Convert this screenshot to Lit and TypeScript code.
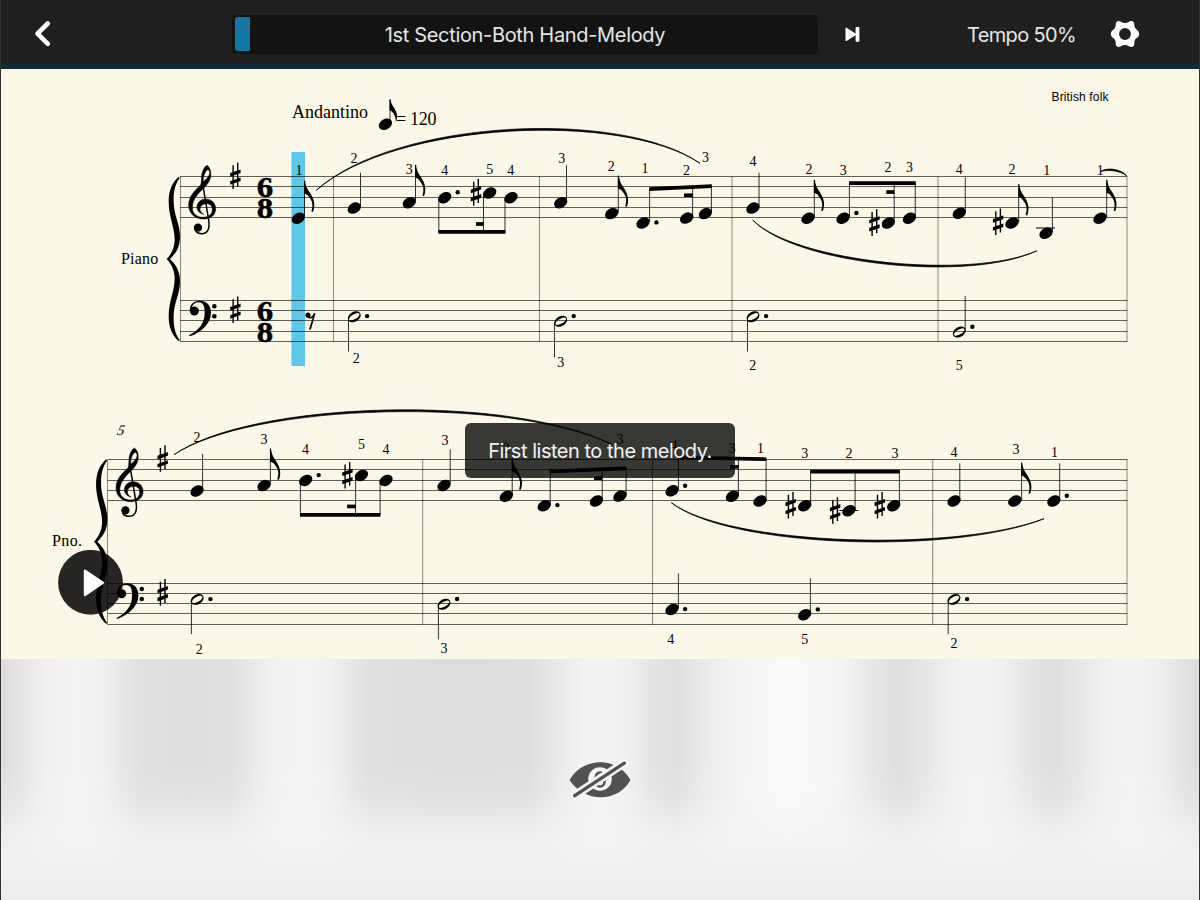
import { LitElement, html, svg, css } from "lit";
import { customElement } from "lit/decorators.js";

type Stem = { x: number; to: number };
type Note = { x: number; y: number; stem: Stem; half?: boolean; flag?: boolean; dot?: [number, number] };
type Mark = [string, number, number];

const n = (x: number, y: number, sx: number, to: number, extra: Partial<Note> = {}): Note => ({ x, y, stem: { x: sx, to }, ...extra });

const NOTES: Note[] = [
  n(385.4, 124.3, 390, 99.5, { flag: false }),
  n(298.3, 218.3, 304.5, 181, { flag: true }),
  n(354.3, 208.1, 360.5, 172.7),
  n(409.3, 202.7, 415.5, 165.3, { flag: true }),
  n(444.7, 197.7, 438.8, 233, { dot: [457.7, 192.3] }),
  n(489.7, 193, 483.5, 233),
  n(511, 197.7, 505, 233),
  n(560.7, 202.7, 566.5, 165.3),
  n(611.7, 213.6, 618.3, 176, { flag: true }),
  n(643, 223, 649.6, 188, { dot: [656.4, 222.4] }),
  n(686.7, 218.1, 692.6, 187),
  n(705.4, 213.6, 711.4, 186),
  n(753, 208.1, 759, 172.7),
  n(808, 218.3, 814.3, 180.3, { flag: true }),
  n(843, 218.3, 849.4, 183, { dot: [856.4, 213] }),
  n(888.3, 223, 894.2, 183),
  n(909.4, 218.3, 915.3, 183),
  n(959.3, 213.3, 965.3, 177.3),
  n(1012, 223, 1018.7, 184.7, { flag: true }),
  n(1046, 233.3, 1052.4, 197.3),
  n(1100, 218.3, 1106.7, 180.3, { flag: true }),
  n(354.3, 316.7, 348.5, 351.5, { half: true, dot: [367.1, 316.1] }),
  n(560.7, 321.3, 554.5, 357.3, { half: true, dot: [573.7, 316.1] }),
  n(753, 316.7, 747.5, 351.5, { half: true, dot: [766.1, 316.1] }),
  n(959.3, 332, 965.2, 296, { half: true, dot: [972.4, 326.8] }),

  n(197, 491, 202.6, 454),
  n(264, 485.6, 270.4, 449, { flag: true }),
  n(305.7, 480.4, 300.4, 515, { dot: [318.7, 475.1] }),
  n(361.4, 475.4, 355.6, 515),
  n(386, 480.4, 380.1, 515),
  n(444, 485.5, 450.2, 449.3),
  n(506.3, 496.3, 512.2, 459, { flag: true }),
  n(544.3, 505.7, 550.2, 471, { dot: [557.4, 505.1] }),
  n(596.4, 501, 602.2, 469),
  n(620, 496.1, 626.1, 468),
  n(672, 490.8, 678.4, 457, { dot: [685.1, 485.8] }),
  n(732.4, 496.3, 738.4, 458),
  n(760, 501, 766.1, 459),
  n(804.7, 505.7, 810.6, 471),
  n(849, 510.7, 855.1, 471),
  n(893.7, 505.7, 899.4, 471),
  n(954, 501, 959.8, 463.3),
  n(1014.8, 501, 1021.6, 463, { flag: true }),
  n(1053.8, 501, 1059.7, 463.3, { dot: [1066.8, 495.8] }),
  n(197.2, 599.4, 191.4, 634.2, { half: true, dot: [210.4, 599.1] }),
  n(444, 604.2, 438.4, 639.4, { half: true, dot: [457.1, 599] }),
  n(672, 609.4, 678.4, 573.4, { dot: [685.1, 609.1] }),
  n(804.7, 614.7, 810.4, 578.4, { dot: [817.8, 609.4] }),
  n(954, 599.4, 948.2, 634.2, { half: true, dot: [967.1, 599.1] }),
];

// x1, top1, x2, top2, thickness
const BEAMS: number[][] = [
  [438.4, 230, 505.3, 230, 3.8], [476, 222.1, 483.7, 222.1, 3.8],
  [649.2, 187.2, 711.8, 184.3, 3.7], [684, 193.4, 692.8, 193.4, 3.6],
  [849, 181.3, 915.7, 181.3, 3.8], [886.3, 190.2, 894.3, 190.2, 3.7],
  [300, 513, 380.4, 513, 3.7], [347.1, 504.6, 355.7, 504.6, 3.7],
  [549.8, 469.6, 626.4, 466.6, 3.6], [594, 476.4, 602.3, 476.4, 3.6],
  [678.1, 455.7, 766.4, 457.4, 3.6], [730, 465, 738.6, 465, 3.7],
  [810.2, 469.7, 899.8, 469.7, 3.7],
];

const SHARPS: [number, number][] = [
  [235.4, 175.8], [235.4, 309.8], [476, 192.4], [874.4, 222.6], [998.1, 221.8],
  [162.7, 458.5], [162.7, 592.4], [347.4, 475.2], [790.7, 505.3], [835.1, 510.5], [879.8, 505.3],
];

const FINGERS: Mark[] = [
  ["1", 299, 175], ["2", 354, 163], ["3", 409.3, 173.5], ["4", 444.7, 175.2], ["5", 489.7, 173.5], ["4", 510.8, 175.2],
  ["3", 561.7, 162.8], ["2", 611.2, 171.2], ["1", 645, 173.4], ["2", 686.4, 175.2], ["3", 705.6, 161.8],
  ["4", 753, 165.8], ["2", 809, 173.6], ["3", 843.3, 175.4], ["2", 888, 171.6], ["3", 909.4, 171.6],
  ["4", 959.3, 173.8], ["2", 1012, 173.8], ["1", 1046.8, 175.2], ["1", 1100.3, 175.2],
  ["2", 356.3, 363.4], ["3", 560.7, 366.8], ["2", 752.7, 369.8], ["5", 959.3, 370],
  ["2", 197, 441.8], ["3", 264, 444.2], ["4", 305.6, 453.8], ["5", 361.4, 449], ["4", 386, 453.8],
  ["3", 445.1, 445.4], ["2", 506.2, 453], ["3", 619.9, 444.4], ["4", 674, 450],
  ["3", 732.3, 453], ["1", 760.6, 452.8], ["3", 804.7, 457.8], ["2", 849, 457.8], ["3", 895, 457.8],
  ["4", 954, 456.6], ["3", 1016, 454], ["1", 1054.4, 456.6],
  ["2", 199.3, 653.6], ["3", 444, 652.8], ["4", 670.8, 643.6], ["5", 804.7, 644.4], ["2", 954, 648.4],
];

// x0 y0 x1 y1 x2 y2 x3 y3, half thickness of the control offset
const SLURS: number[][] = [
  [316.3, 190.3, 395, 120, 622, 109.8, 700, 163.3, 1.2],
  [752.7, 220, 795, 263.6, 970, 281.4, 1037, 250.7, 1.2],
  [1101, 171.4, 1106, 168.6, 1120, 169, 1126.8, 176, 1],
  [174, 454.7, 252, 401.6, 510, 394.7, 611.7, 444.3, 1.2],
  [671.3, 502.7, 730, 547.3, 955, 553.5, 1044, 518.7, 1.2],
];

const SYSTEMS = [
  { left: 180, lines: [176.5, 186.5, 197.5, 207.5, 217.5, 300.5, 310.5, 320.5, 331.5, 341.5], bars: [180.5, 333.5, 539.5, 732, 938, 1127] },
  { left: 107.5, lines: [459.5, 469.5, 480.5, 490.5, 500.5, 583.5, 593.5, 603.5, 613.5, 624.5], bars: [107.5, 422.7, 652.5, 932.7, 1127] },
];

const note = (v: Note) => svg`
  <line x1=${v.stem.x} x2=${v.stem.x} y1=${v.y + (v.stem.to < v.y ? -1 : 1)} y2=${v.stem.to} stroke="#000" stroke-width="1" opacity=".8"/>
  ${v.half
    ? svg`<g transform="translate(${v.x} ${v.y}) rotate(-30)"><path fill-rule="evenodd" d="M-6.9 0A6.9 4.9 0 1 0 6.9 0A6.9 4.9 0 1 0-6.9 0ZM-5.9 .3A5.9 2.5 0 1 1 5.9-.3A5.9 2.5 0 1 1-5.9 .3Z"/></g>`
    : svg`<ellipse rx="7.1" ry="5.2" transform="translate(${v.x} ${v.y}) rotate(-30)"/>`}
  ${v.flag ? svg`<path transform="translate(${v.stem.x - 0.4} ${v.stem.to - 0.6})" d="M0 0H1C1.500 7 4.500 10 7.200 14.500C10.600 20.500 11 25.500 9 31.300L7.300 31C9 25.500 8.600 21.500 5.800 17.700C4 14.800 2 13.200 0 13Z"/>` : ""}
  ${v.dot ? svg`<circle cx=${v.dot[0]} cy=${v.dot[1]} r="2.200"/>` : ""}`;

const sharp = ([x, y]: [number, number]) => svg`
  <path transform="translate(${x} ${y})" d="M-3-10.600H-1.600V13.300H-3ZM1.600-13.300H3V10.600H1.600ZM-5.200-2.700L5.200-6.400V-2.800L-5.200 .9ZM-5.200 5.400L5.200 1.700V5.300L-5.200 9Z"/>`;

const slur = ([a, b, c, d, e, f, g, h, t]: number[]) => svg`
  <path stroke="#000" stroke-width=".75" d="M${a} ${b}C${c} ${d - t} ${e} ${f - t} ${g} ${h}C${e} ${f + t} ${c} ${d + t} ${a} ${b}Z"/>`;

const clefs = svg`
  <g transform="scale(.33333)">
    <path fill-rule="evenodd" stroke="#000" stroke-width="1.600" d="M291 76C301 84 305 98 301 114C296 134 277 147 264 162C253 175 247 188 247 203C247 221 261 232 279 232C297 232 307 222 307 208C307 196 298 190 287 191C276 192 270 200 270 208C270 214 274 219 281 223C268 220 261 211 261 202C261 188 272 177 286 177C305 177 317 190 317 206C317 224 303 237 280 237C255 237 236 220 236 195C236 170 254 152 272 135C275 128 274 118 275 106C277 94 283 80 291 76ZM293 89C286 93 279 106 280 125C290 116 299 108 299 98C299 92 297 89 293 89Z"/>
    <path fill="none" stroke="#000" stroke-width="4.500" d="M277 125L296 240C300 264 294 281 275 281C264 281 256 275 255 266"/>
    <circle cx="264" cy="263" r="12.500"/>
    <path d="M240 514C237 494 252 482 270 482C291 482 303 497 303 518C303 550 275 577 239 589L237 586C268 570 284 550 284 517C284 498 280 487 266 487C256 487 249 493 246 501Z"/>
    <circle cx="253" cy="513" r="13.500"/>
    <circle cx="313" cy="499" r="6.800"/><circle cx="313" cy="529" r="6.800"/>
    <path d="M207 110C188 125 176 150 176 185C176 232 195 262 194 302C193 325 182 345 170 357C182 369 193 389 194 412C195 452 176 482 176 529C176 564 188 589 207 604L209 600C197 584 190 562 191 529C191 489 210 464 210 424C210 390 195 372 180 357C195 342 210 324 210 290C210 250 191 225 191 185C190 152 197 130 209 114Z"/>
  </g>`;

@customElement("lesson-score")
class LessonScore extends LitElement {
  static styles = css`
    :host { display: block; width: 1200px; height: 590px; overflow: hidden; background: #fbf8e7; }
    svg { display: block; }
    .serif { font-family: "Liberation Serif", serif; }
    .finger { font: 14px "Liberation Serif", serif; text-anchor: middle; }
    .time { font: bold 30px "Liberation Serif", serif; stroke: #000; stroke-width: .5; }
    .credit { font: 12px "Liberation Sans", sans-serif; }
  `;
  render() {
    return html`<svg width="1200" height="590" viewBox="0 69 1200 590">
      <rect x="291.400" y="152" width="13.600" height="214" fill="#5bc8ec"/>
      ${SYSTEMS.map((s) => svg`<g stroke="#000" fill="none">
        ${s.lines.map((y) => svg`<line x1=${s.left} x2="1127.300" y1=${y} y2=${y} stroke-opacity=".62"/>`)}
        ${s.bars.map((x) => svg`<line x1=${x} x2=${x} y1=${s.lines[0]} y2=${s.lines[9]} stroke-opacity=".45"/>`)}
      </g>`)}
      <g transform="translate(110 140)">${clefs}</g>
      <g transform="translate(37.400 422.700)">${clefs}</g>
      ${SHARPS.map(sharp)}
      ${[197.2, 217.8, 321.2, 341.6].map((y, i) => svg`<text class="time" x="256.800" y=${y} textLength="16.400" lengthAdjust="spacingAndGlyphs">${i % 2 ? "8" : "6"}</text>`)}
      ${NOTES.map(note)}
      <path d="M389.600 99.500H390.500C391 106 397 109 397 116Q397.200 119.500 395.800 122.500C396.200 115 392.500 111.500 389.600 110Z"/>
      ${BEAMS.map(([a, b, c, d, t]) => svg`<path d="M${a} ${b}L${c} ${d}V${d + t}L${a} ${b + t}Z"/>`)}
      ${SLURS.map(slur)}
      <path d="M1036 227.500H1055V228.600H1036ZM839.300 510H858.300V511.100H839.300Z"/>
      <circle cx="308" cy="315" r="2.600"/>
      <path d="M307 316.500C310.500 318 312.500 316.500 314 313L315.500 313.400L310.900 329.400H308.900L312.700 317.800C311 319 309 319 307 317Z"/>
      ${FINGERS.map(([t, x, y]) => svg`<text class="finger" x=${x} y=${y}>${t}</text>`)}
      <text class="serif" font-size="14.500" font-style="italic" transform="translate(116.600 435) skewX(-12)">5</text>
      <text class="serif" font-size="18" x="292" y="118.200" textLength="76">Andantino</text>
      <text class="serif" font-size="18" x="396" y="125.400" textLength="40.500">= 120</text>
      <text class="serif" font-size="16" x="121" y="263.600" textLength="37.300">Piano</text>
      <text class="serif" font-size="16" x="52" y="546.400" textLength="30">Pno.</text>
      <text class="credit" x="1051.500" y="101.200" textLength="57">British folk</text>
    </svg>`;
  }
}

@customElement("app-root")
class AppRoot extends LitElement {
  static styles = css`
    :host { display: block; position: relative; width: 1200px; height: 900px; overflow: hidden; font-family: Inter, "Liberation Sans", sans-serif; background: #f0f0f0; }
    header { box-sizing: border-box; height: 69px; display: flex; align-items: center; padding: 0 60px 0 32px; background: #1f1f1f; border-bottom: 5px solid #102b3a; color: #e6e6e6; font-size: 20px; }
    header svg, .progress, .tempo { flex: none; }
    header svg { display: block; }
    .back { margin-top: 3px; }
    .progress { box-sizing: border-box; display: grid; align-items: center; width: 586px; height: 39px; margin: 4px 0 0 178px; padding: 2.500px; border-radius: 4px; background: #131313; }
    .fill { grid-area: 1 / 1; width: 15.500px; height: 34px; border-radius: 3px 0 0 3px; background: #1277a2; }
    .title { grid-area: 1 / 1; padding-top: 2px; text-align: center; white-space: nowrap; letter-spacing: -.33px; }
    .next { margin: 4px 0 0 27px; }
    .tempo { width: 109px; margin: 5px 0 0 106px; white-space: nowrap; letter-spacing: -.66px; }
    .gear { margin: 3px 0 0 34px; }
    .keys { position: relative; height: 241px; display: grid; place-items: center; background: linear-gradient(#f4f0ef, #f6f6f6 30%, #f5f5f5 75%, #ededed); }
    .shade { grid-area: 1 / 1; width: 1200px; height: 241px; background: linear-gradient(90deg, #dedcdc 0, #e6e4e4 22px, #f1efef 45px, #f6f5f5 76px, #f2f1f1 100px, #e8e7e7 122px, #e0dfdf 145px, #dedede 190px, #dfdfdf 228px, #eae9e9 253px, #f3f2f2 276px, #f6f5f5 303px, #f2f1f1 328px, #e8e7e7 350px, #e0dfdf 372px, #dedddd 450px, #dfdede 530px, #eae9e9 558px, #f3f2f2 582px, #f5f4f4 605px, #f0efef 628px, #e6e5e5 650px, #e0dfdf 675px, #ebeaea 705px, #f6f5f5 740px, #fbfafa 788px, #f6f5f5 838px, #e9e8e8 868px, #dfdede 900px, #e9e8e8 930px, #f2f1f1 955px, #f5f4f4 977px, #f1f0f0 1002px, #e8e7e7 1025px, #dfdede 1052px, #e8e7e7 1080px, #f2f1f1 1107px, #f5f4f4 1132px, #f0efef 1157px, #e5e4e4 1180px, #dddcdc 1200px); -webkit-mask-image: linear-gradient(#000 0, #000 44%, rgba(0,0,0,.9) 54%, rgba(0,0,0,.65) 62%, rgba(0,0,0,.33) 71%, rgba(0,0,0,.12) 80%, transparent 90%); mask-image: linear-gradient(#000 0, #000 44%, rgba(0,0,0,.9) 54%, rgba(0,0,0,.65) 62%, rgba(0,0,0,.33) 71%, rgba(0,0,0,.12) 80%, transparent 90%); }
    .eye { grid-area: 1 / 1; z-index: 1; display: block; }
    .play { position: absolute; left: 57.500px; top: 550px; width: 65px; height: 65px; }
    .toast { box-sizing: border-box; position: absolute; left: 465px; top: 422.500px; width: 270px; height: 55px; padding-top: 2px; display: flex; align-items: center; justify-content: center; border-radius: 6px; background: rgba(0,0,0,.78); color: #f4f4f4; font-size: 20px; letter-spacing: -.48px; white-space: nowrap; }
    .frame { position: absolute; inset: 0; border: solid #33332f; border-width: 0 1px; pointer-events: none; }
  `;
  render() {
    return html`
      <header>
        <svg class="back" width="22" height="28" viewBox="0 0 22 28"><path d="M15.800 3.500L5.500 13.700L15.800 23.800" fill="none" stroke="#fff" stroke-width="4.600" stroke-linecap="round" stroke-linejoin="round"/></svg>
        <div class="progress"><div class="fill"></div><div class="title">1st Section-Both Hand-Melody</div></div>
        <svg class="next" width="16" height="17" viewBox="0 0 16 17"><path d="M1.500 1.700L10.600 7.400V1.700Q10.600 .9 11.400 .9H13.600Q14.400 .9 14.400 1.700V15Q14.400 15.800 13.600 15.800H11.400Q10.600 15.800 10.600 15V9.300L1.500 15Q.5 15.400 .5 14.500V2.200Q.5 1.300 1.500 1.700Z" fill="#fff"/></svg>
        <div class="tempo">Tempo 50%</div>
        <svg class="gear" width="30" height="30" viewBox="-15 -15 30 30"><path fill="#fff" fill-rule="evenodd" d="M-8.500-12C-7.500-13.200-5.500-13.400-4-12.300Q0-9.800 4-12.300C5.500-13.400 7.500-13.200 8.500-12Q9.600-11 9.300-8.500Q9.400-5.200 12.300-3.800Q14.200-2.800 14.200 0Q14.200 2.800 12.300 3.800Q9.400 5.200 9.300 8.500Q9.600 11 8.500 12C7.500 13.200 5.500 13.400 4 12.300Q0 9.800-4 12.300C-5.500 13.400-7.500 13.200-8.500 12Q-9.600 11-9.300 8.500Q-9.400 5.200-12.300 3.800Q-14.200 2.800-14.200 0Q-14.200-2.800-12.300-3.800Q-9.400-5.200-9.300-8.500Q-9.600-11-8.500-12ZM-5.900 0A5.900 5.900 0 1 0 5.900 0A5.900 5.900 0 1 0-5.900 0Z"/></svg>
      </header>
      <lesson-score></lesson-score>
      <div class="keys">
        <div class="shade"></div>
        <svg class="eye" width="64" height="44" viewBox="-32 -22 64 44">
          <path fill="#525252" d="M-30.500 0C-18-22 16-25 30.500 0C18 23-16 23-30.500 0Z"/>
          <circle r="11.800" cy="-1" fill="#f5f5f5"/>
          <path fill="none" stroke="#525252" stroke-width="2.600" d="M-4.500 2V-2A4.500 5.500 0 0 1 4.500-2V2A4.500 4.500 0 0 1-4.500 2Z"/>
          <path stroke="#f5f5f5" stroke-width="8.600" d="M-28 17.400L28-19.600"/>
          <path stroke="#525252" stroke-width="3.400" stroke-linecap="round" d="M-25.300 15.600L24.300-16.800"/>
        </svg>
      </div>
      <svg class="play" viewBox="0 0 65 65"><circle cx="32.500" cy="32.300" r="32.400" fill="#000" fill-opacity=".85"/><path d="M27 20.800L44.800 32.800L27 45Z" fill="#fff" stroke="#fff" stroke-width="2.400" stroke-linejoin="round"/></svg>
      <div class="toast">First listen to the melody.</div>
      <div class="frame"></div>`;
  }
}
